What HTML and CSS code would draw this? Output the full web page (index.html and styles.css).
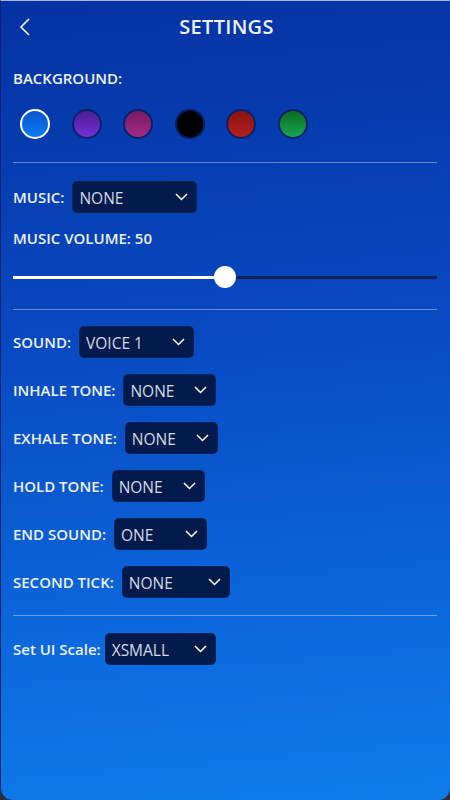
FILE: index.html
```html
<!DOCTYPE html>
<html>
  <head>
    <title>Settings</title>
    <link rel="stylesheet" href="styles.css">
  </head>
  <body>
    <div class="screen">
      <div class="header">
        <svg class="back" width="14" height="20" viewBox="0 0 14 20"><path d="M11 2 L3 10 L11 18" fill="none" stroke="#fff" stroke-width="1.6"/></svg>
        <div class="title">SETTINGS</div>
      </div>

      <div class="label bg-label">BACKGROUND:</div>
      <div class="swatches">
        <div class="swatch blue selected"></div>
        <div class="swatch purple"></div>
        <div class="swatch magenta"></div>
        <div class="swatch black"></div>
        <div class="swatch red"></div>
        <div class="swatch green"></div>
      </div>

      <div class="divider first"></div>

      <div class="row music-row">
        <span class="label">MUSIC:</span>
        <div class="select w125"><span>NONE</span><svg width="13" height="8" viewBox="0 0 13 8"><path d="M1 1 L6.5 6.5 L12 1" fill="none" stroke="#fff" stroke-width="1.5"/></svg></div>
      </div>
      <div class="label volume">MUSIC VOLUME: 50</div>
      <div class="slider">
        <div class="track-fill"></div>
        <div class="thumb"></div>
        <div class="track-rest"></div>
      </div>

      <div class="divider second"></div>

      <div class="rows">
        <div class="row">
          <span class="label">SOUND:</span>
          <div class="select w115"><span>VOICE 1</span><svg width="13" height="8" viewBox="0 0 13 8"><path d="M1 1 L6.5 6.5 L12 1" fill="none" stroke="#fff" stroke-width="1.5"/></svg></div>
        </div>
        <div class="row">
          <span class="label">INHALE TONE:</span>
          <div class="select w93"><span>NONE</span><svg width="13" height="8" viewBox="0 0 13 8"><path d="M1 1 L6.5 6.5 L12 1" fill="none" stroke="#fff" stroke-width="1.5"/></svg></div>
        </div>
        <div class="row">
          <span class="label">EXHALE TONE:</span>
          <div class="select w93"><span>NONE</span><svg width="13" height="8" viewBox="0 0 13 8"><path d="M1 1 L6.5 6.5 L12 1" fill="none" stroke="#fff" stroke-width="1.5"/></svg></div>
        </div>
        <div class="row">
          <span class="label">HOLD TONE:</span>
          <div class="select w93"><span>NONE</span><svg width="13" height="8" viewBox="0 0 13 8"><path d="M1 1 L6.5 6.5 L12 1" fill="none" stroke="#fff" stroke-width="1.5"/></svg></div>
        </div>
        <div class="row">
          <span class="label">END SOUND:</span>
          <div class="select w93"><span>ONE</span><svg width="13" height="8" viewBox="0 0 13 8"><path d="M1 1 L6.5 6.5 L12 1" fill="none" stroke="#fff" stroke-width="1.5"/></svg></div>
        </div>
        <div class="row">
          <span class="label">SECOND TICK:</span>
          <div class="select w108"><span>NONE</span><svg width="13" height="8" viewBox="0 0 13 8"><path d="M1 1 L6.5 6.5 L12 1" fill="none" stroke="#fff" stroke-width="1.5"/></svg></div>
        </div>
      </div>

      <div class="divider third"></div>

      <div class="row scale-row">
        <span class="label">Set UI Scale:</span>
        <div class="select w111"><span>XSMALL</span><svg width="13" height="8" viewBox="0 0 13 8"><path d="M1 1 L6.5 6.5 L12 1" fill="none" stroke="#fff" stroke-width="1.5"/></svg></div>
      </div>
    </div>
  </body>
</html>
```
FILE: styles.css
```css
html, body {
  margin: 0;
  padding: 0;
  background: #2e2e33;
}
.screen {
  width: 450px;
  height: 800px;
  box-sizing: border-box;
  padding: 0 13px 0 12px;
  background: linear-gradient(175deg, #0532a2 0%, #0848c0 40%, #0b66dc 75%, #0f7cec 100%);
  border-top: 1px solid #a9b3d8;
  border-left: 1px solid #0a2470;
  border-radius: 0 0 12px 12px;
  font-family: "Open Sans", "Noto Sans", sans-serif;
  color: #eef1f8;
  display: flex;
  flex-direction: column;
}
.header {
  height: 51px;
  position: relative;
  display: flex;
  align-items: center;
  justify-content: center;
  padding-left: 3px;
}
.back {
  position: absolute;
  left: 5px;
  top: 16px;
}
.title {
  font-size: 20px;
  font-weight: 600;
  letter-spacing: 0.3px;
}
.label {
  font-size: 15px;
  font-weight: 600;
  line-height: 20px;
  white-space: nowrap;
}
.bg-label {
  margin-top: 16px;
}
.swatches {
  display: flex;
  gap: 21.5px;
  padding-left: 7px;
  margin-top: 21px;
}
.swatch {
  width: 30px;
  height: 30px;
  box-sizing: border-box;
  border-radius: 50%;
  border: 2px solid #0b2265;
}
.swatch.selected {
  border-color: #fff;
}
.blue { background: linear-gradient(#0b55cf, #0b7df2); }
.purple { background: linear-gradient(#4a1d96, #7230d4); }
.magenta { background: linear-gradient(#781a62, #a52a88); }
.black { background: #000; border-color: #0a1c55; }
.red { background: linear-gradient(#861414, #b21e1c); }
.green { background: linear-gradient(#0e6a24, #16a653); }
.divider {
  height: 1px;
  background: rgba(255, 255, 255, 0.38);
}
.divider.first { margin-top: 23px; }
.divider.second { margin-top: 21px; }
.divider.third { margin-top: 17px; }
.row {
  display: flex;
  align-items: center;
  gap: 8px;
  height: 32px;
}
.music-row { margin-top: 18px; }
.volume { margin-top: 15px; }
.slider {
  margin-top: 18px;
  height: 22px;
  display: flex;
  align-items: center;
}
.track-fill {
  width: 201px;
  height: 3px;
  background: #fff;
}
.thumb {
  width: 22px;
  height: 22px;
  border-radius: 50%;
  background: #fff;
}
.track-rest {
  flex: 1;
  height: 3px;
  background: #062256;
}
.rows {
  margin-top: 16px;
  display: flex;
  flex-direction: column;
  gap: 16px;
}
.select {
  height: 32px;
  box-sizing: border-box;
  border-radius: 5px;
  background: #031a4c;
  border: 1px solid rgba(20, 40, 90, 0.6);
  display: flex;
  align-items: center;
  justify-content: space-between;
  padding: 0 8px 0 6px;
  font-size: 15.5px;
  color: #d6dbe6;
}
.select span { padding-top: 1px; }
.w125 { width: 125px; }
.w115 { width: 115px; }
.w93 { width: 93px; }
.w108 { width: 108px; }
.w111 { width: 111px; }
.scale-row {
  margin-top: 17px;
  gap: 4px;
}
```
